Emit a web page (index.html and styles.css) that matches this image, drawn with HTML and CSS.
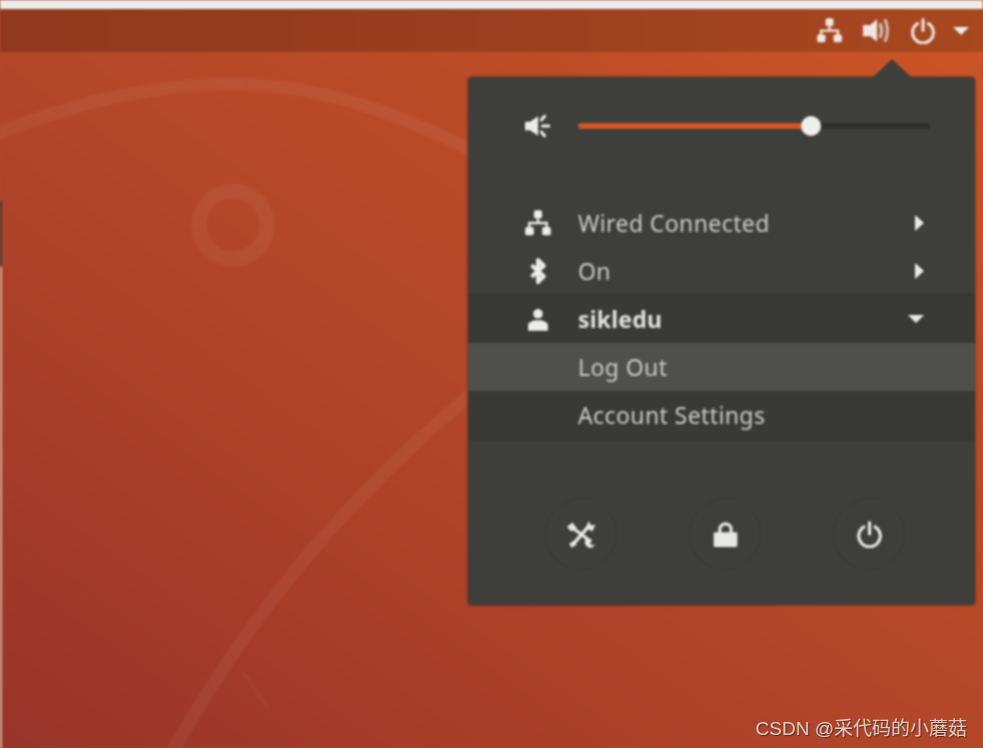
FILE: index.html
```html
<!DOCTYPE html>
<html lang="en">
<head>
    <meta charset="UTF-8">
    <title>Ubuntu system menu</title>
    <link rel="stylesheet" href="styles.css">
</head>
<body>

<svg class="icon-defs" aria-hidden="true">
    <symbol id="i-network" viewBox="0 0 24 24">
        <path d="M12 6v6M4.500 17v-5h15v5" fill="none" stroke="currentColor" stroke-width="2"/>
        <rect x="8.500" y="1" width="7" height="7" rx="1.600" fill="currentColor"/>
        <rect x="1" y="15.500" width="7.400" height="7" rx="1.600" fill="currentColor"/>
        <rect x="15.600" y="15.500" width="7.400" height="7" rx="1.600" fill="currentColor"/>
    </symbol>
    <symbol id="i-power" viewBox="0 0 24 24">
        <path d="M7 5.200a9.600 9.600 0 1 0 10 0" fill="none" stroke="currentColor" stroke-width="2.800" stroke-linecap="round"/>
        <path d="M12 1.500v10" fill="none" stroke="currentColor" stroke-width="2.800" stroke-linecap="round"/>
    </symbol>
</svg>

<div class="screen">
    <div class="top-strip"></div>

    <header class="top-bar">
        <svg class="bar-icon"><use href="#i-network"/></svg>
        <svg class="bar-icon bar-sound" viewBox="0 0 24 24">
            <path d="M0 7h6.500L12.500 2v20l-6-5H0z" fill="currentColor"/>
            <path d="M15 5.500q3 6.500 0 13" fill="none" stroke="#d4bcae" stroke-width="3"/>
            <path d="M19.500 2q4.500 10 0 20" fill="none" stroke="#d9c2b4" stroke-width="2.600"/>
        </svg>
        <svg class="bar-icon bar-power"><use href="#i-power"/></svg>
        <span class="caret-down bar-caret"></span>
    </header>

    <main class="desktop">
        <!-- wallpaper lines -->
        <svg class="wallpaper" viewBox="0 0 983 696" aria-hidden="true">
            <path d="M-4 82Q120 32 232 32T474 100" fill="none" stroke="#fff" stroke-opacity=".05" stroke-width="13"/>
            <circle cx="233" cy="173" r="34" fill="none" stroke="#fff" stroke-opacity=".05" stroke-width="15"/>
            <path d="M172 700Q290 490 474 340" fill="none" stroke="#fff" stroke-opacity=".05" stroke-width="13"/>
            <path d="M243 620L268 656" fill="none" stroke="#fff" stroke-opacity=".035" stroke-width="3"/>
        </svg>

        <div class="left-edge"></div>

        <div class="menu-wrap">
            <div class="menu-arrow"></div>
            <section class="menu">
                <div class="volume-row">
                    <svg class="row-icon volume-icon" viewBox="0 0 24 24">
                        <path d="M1 8h4.500L13 3v18l-7.500-5H1z" fill="currentColor"/>
                        <path d="M16 6.500L19 3M17 12H23M16 17.500L19 21" fill="none" stroke="currentColor" stroke-width="2.800" stroke-linecap="round"/>
                    </svg>
                    <div class="slider">
                        <div class="slider-fill"></div>
                        <div class="slider-thumb"></div>
                    </div>
                </div>

                <div class="row">
                    <svg class="row-icon"><use href="#i-network"/></svg>
                    <span class="row-label">Wired Connected</span>
                    <span class="caret-right"></span>
                </div>
                <div class="row">
                    <svg class="row-icon" viewBox="0 0 24 24">
                        <path d="M6.500 7L17 16.500 12 21.500V2.500L17 7.500 6.500 17" fill="none" stroke="currentColor" stroke-width="3.400" stroke-linejoin="round"/>
                    </svg>
                    <span class="row-label">On</span>
                    <span class="caret-right"></span>
                </div>

                <div class="submenu">
                    <div class="row row-user">
                        <svg class="row-icon" viewBox="0 0 24 24">
                            <path d="M8 6.500a4.200 4.500 0 0 1 8 0c0 3-.5 5-4 5s-4-2-4-5z" fill="currentColor"/>
                            <path d="M3.500 22v-4.500c0-2.500 2.500-3.500 5.500-4.500h6c3 1 5.500 2 5.500 4.500V22z" fill="currentColor"/>
                        </svg>
                        <span class="row-label">sikledu</span>
                        <span class="caret-down"></span>
                    </div>
                    <div class="row row-active">
                        <span class="row-label row-sub">Log Out</span>
                    </div>
                    <div class="row">
                        <span class="row-label row-sub">Account Settings</span>
                    </div>
                </div>

                <div class="actions">
                    <div class="action">
                        <svg class="action-icon tools-icon" viewBox="0 0 24 24">
                            <path d="M4 6L20 18M18 5L6 19" fill="none" stroke="currentColor" stroke-width="2.800"/>
                            <path d="M0 5.500L4.500 2 8 6.500 3.500 9.500z" fill="currentColor"/>
                            <path d="M15.500 6.500L18 1l2 3.500L23.500 4 21 9.500z" fill="currentColor"/>
                            <path d="M2 19.500L6 17l2 3.500L3.500 23z" fill="currentColor"/>
                            <path d="M15 16.500a5 5 0 0 0 5.500 6.500l3-2.500-3.500 .200-1-1.700 1-3.500z" fill="currentColor"/>
                        </svg>
                    </div>
                    <div class="action">
                        <svg class="action-icon" viewBox="0 0 24 24">
                            <path d="M7 11V7.500a5 5 0 0 1 10 0V11" fill="none" stroke="currentColor" stroke-width="2.800"/>
                            <rect x="1.500" y="10" width="21" height="13" rx="1.200" fill="currentColor"/>
                        </svg>
                    </div>
                    <div class="action">
                        <svg class="action-icon"><use href="#i-power"/></svg>
                    </div>
                </div>
            </section>
        </div>
    </main>
</div>

<div class="watermark">CSDN @采代码的小蘑菇</div>

</body>
</html>
```

FILE: styles.css
```css
body {
    margin: 0;
    width: 983px;
    height: 748px;
    overflow: hidden;
    position: relative;
    background-color: #b5462a;
    font-family: "Noto Sans", "Open Sans", sans-serif;
}

.icon-defs {
    display: none;
}

.screen {
    display: flex;
    flex-direction: column;
    height: 748px;
    filter: blur(0.9px);
}

.top-strip {
    height: 9px;
    background-color: #ececec;
}

.top-bar {
    height: 43px;
    display: flex;
    align-items: center;
    justify-content: flex-end;
    padding-right: 14px;
    color: #f0e6df;
    background: linear-gradient(90deg, #92391d 0%, #9a3f1f 50%, #a8481f 100%);
}

.bar-icon {
    width: 27px;
    height: 27px;
}

.bar-sound {
    margin-left: 20px;
}

.bar-power {
    width: 26px;
    height: 26px;
    margin-left: 20px;
}

.bar-caret {
    margin-left: 17px;
}

.desktop {
    flex: 1;
    display: flex;
    justify-content: space-between;
    position: relative;
    background: linear-gradient(to top right, #98342a 0%, #a83d28 25%, #b4472a 50%, #bd4c27 75%, #cc5526 100%);
}

.wallpaper {
    position: absolute;
    left: 0;
    top: 0;
    width: 983px;
    height: 696px;
}

.left-edge {
    width: 2px;
    position: relative;
    background: linear-gradient(180deg, transparent 148px, #3f3c38 150px, #3f3c38 213px, #cfae9f 216px);
}

.menu-wrap {
    width: 507px;
    margin-right: 8px;
    position: relative;
}

.menu-arrow {
    width: 40px;
    height: 19px;
    margin: 7px 0 -1px 404px;
    background-color: #3e3e3a;
    clip-path: polygon(0 100%, 50% 0, 100% 100%);
}

.menu {
    background-color: #3e3e3a;
    color: #cbcbc7;
    border-radius: 4px;
    height: 528px;
    box-shadow: 0 0 3px rgba(40, 20, 10, 0.7);
}

.volume-row {
    height: 98px;
    display: flex;
    align-items: center;
    padding-left: 56px;
    margin-bottom: 24px;
}

.row-icon {
    width: 28px;
    height: 28px;
    flex-shrink: 0;
    color: #ecece8;
}

.volume-icon {
    width: 26px;
    height: 26px;
    margin-right: 28px;
}

.slider {
    width: 352px;
    height: 6px;
    border-radius: 3px;
    background-color: #2e2e2b;
    display: flex;
    align-items: center;
}

.slider-fill {
    width: 233px;
    height: 6px;
    border-radius: 3px 0 0 3px;
    background-color: #d0562a;
}

.slider-thumb {
    width: 20px;
    height: 20px;
    margin-left: -10px;
    border-radius: 50%;
    background-color: #eeeeea;
}

.row {
    height: 48px;
    display: flex;
    align-items: center;
    padding-left: 56px;
    padding-right: 51px;
}

.row-label {
    flex: 1;
    margin-left: 26px;
    font-size: 23px;
    letter-spacing: 0.4px;
}

.row-sub {
    margin-left: 54px;
}

.row-user .row-label {
    font-weight: bold;
    color: #e2e2de;
    letter-spacing: 0.2px;
}

.submenu {
    background-color: #393935;
    border-top: 1px solid #33332f;
    border-bottom: 1px solid #33332f;
    margin-top: -1px;
}

.row-active {
    background-color: #4f4f4b;
}

.caret-right {
    width: 0;
    height: 0;
    border-left: 9px solid #ecece8;
    border-top: 8px solid transparent;
    border-bottom: 8px solid transparent;
}

.caret-down {
    width: 0;
    height: 0;
    border-top: 8px solid currentColor;
    border-left: 8px solid transparent;
    border-right: 8px solid transparent;
    color: #ecece8;
}

.actions {
    display: flex;
    gap: 72px;
    padding-left: 77px;
    margin-top: 58px;
}

.action {
    width: 70px;
    height: 70px;
    border: 1px solid #363632;
    border-radius: 50%;
    display: flex;
    align-items: center;
    justify-content: center;
}

.action-icon {
    width: 27px;
    height: 27px;
    color: #e8e8e4;
}

.tools-icon {
    width: 29px;
    height: 29px;
}

.watermark {
    position: absolute;
    right: 16px;
    bottom: 8px;
    font-family: "Liberation Sans", "Noto Sans CJK SC", sans-serif;
    font-size: 19px;
    color: #d8cbc4;
    text-shadow: 1px 1px 1px rgba(60, 30, 20, 0.7);
}
```
